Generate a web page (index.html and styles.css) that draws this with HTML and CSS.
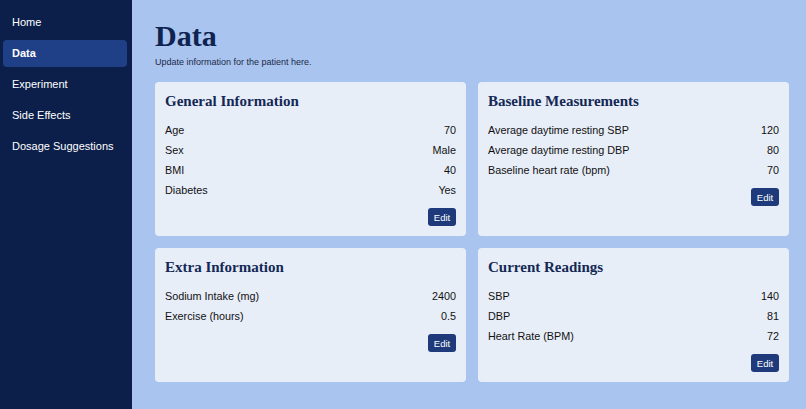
FILE: index.html
```html
<!DOCTYPE html>
<html>
<head>
<meta charset="utf-8">
<link rel="stylesheet" href="styles.css">
</head>
<body>
<div class="app">
  <nav class="sidebar">
    <a class="nav-item">Home</a>
    <a class="nav-item active">Data</a>
    <a class="nav-item">Experiment</a>
    <a class="nav-item">Side Effects</a>
    <a class="nav-item">Dosage Suggestions</a>
  </nav>
  <main class="main">
    <h1 class="page-title">Data</h1>
    <p class="page-sub">Update information for the patient here.</p>
    <div class="grid">
      <section class="card">
        <h2 class="card-title">General Information</h2>
        <div class="row"><span>Age</span><span>70</span></div>
        <div class="row"><span>Sex</span><span>Male</span></div>
        <div class="row"><span>BMI</span><span>40</span></div>
        <div class="row"><span>Diabetes</span><span>Yes</span></div>
        <div class="actions"><button class="btn">Edit</button></div>
      </section>
      <section class="card">
        <h2 class="card-title">Baseline Measurements</h2>
        <div class="row"><span>Average daytime resting SBP</span><span>120</span></div>
        <div class="row"><span>Average daytime resting DBP</span><span>80</span></div>
        <div class="row"><span>Baseline heart rate (bpm)</span><span>70</span></div>
        <div class="actions"><button class="btn">Edit</button></div>
      </section>
      <section class="card">
        <h2 class="card-title">Extra Information</h2>
        <div class="row"><span>Sodium Intake (mg)</span><span>2400</span></div>
        <div class="row"><span>Exercise (hours)</span><span>0.5</span></div>
        <div class="actions"><button class="btn">Edit</button></div>
      </section>
      <section class="card">
        <h2 class="card-title">Current Readings</h2>
        <div class="row"><span>SBP</span><span>140</span></div>
        <div class="row"><span>DBP</span><span>81</span></div>
        <div class="row"><span>Heart Rate (BPM)</span><span>72</span></div>
        <div class="actions"><button class="btn">Edit</button></div>
      </section>
    </div>
  </main>
</div>
</body>
</html>
```

FILE: styles.css
```css
html, body {
  margin: 0;
  padding: 0;
  height: 100%;
}
body {
  font-family: "Liberation Sans", Arial, sans-serif;
  background: #a9c4ee;
}
.app {
  display: flex;
  height: 409px;
}
.sidebar {
  width: 132px;
  flex: none;
  background: #0c1f4a;
  box-sizing: border-box;
  padding: 9px 5px 0 3px;
  display: flex;
  flex-direction: column;
  gap: 4px;
}
.nav-item {
  display: block;
  color: #ffffff;
  font-size: 11px;
  line-height: 13px;
  padding: 7px 9px;
  border-radius: 4px;
}
.nav-item.active {
  background: #1f3f87;
  font-weight: bold;
}
.main {
  flex: 1;
  padding: 0 17px 0 23px;
}
.page-title {
  margin: 19px 0 0 0;
  font-family: "Liberation Serif", "Times New Roman", serif;
  font-weight: bold;
  font-size: 30px;
  line-height: 34px;
  color: #0f2350;
}
.page-sub {
  margin: 3px 0 0 0;
  font-size: 9px;
  line-height: 13px;
  color: #1c2a4a;
}
.grid {
  margin-top: 13px;
  display: grid;
  grid-template-columns: 311px 311px;
  column-gap: 12px;
  row-gap: 12px;
}
.card {
  background: #e8eef8;
  border-radius: 4px;
  padding: 10px;
  display: flex;
  flex-direction: column;
}
.card-title {
  margin: 0 0 10px 0;
  font-family: "Liberation Serif", "Times New Roman", serif;
  font-weight: bold;
  font-size: 15px;
  line-height: 18px;
  color: #132855;
}
.row {
  display: flex;
  justify-content: space-between;
  height: 20px;
  align-items: center;
  font-size: 10.8px;
  color: #111111;
}
.actions {
  display: flex;
  justify-content: flex-end;
  margin-top: 8px;
}
.btn {
  height: 18px;
  width: 28px;
  padding: 0;
  border: none;
  border-radius: 3px;
  background: #1e3a7a;
  color: #ffffff;
  font-family: "Liberation Sans", Arial, sans-serif;
  font-size: 9.5px;
}
```
